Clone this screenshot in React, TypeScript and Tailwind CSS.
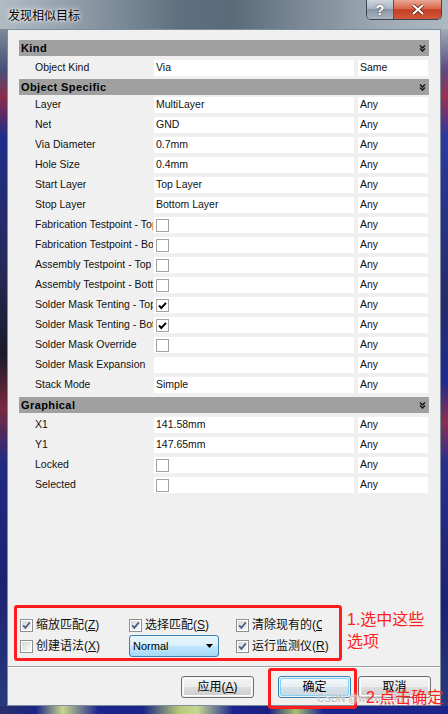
import React from "react"

type Row = {
    label: string
    header?: boolean
    value?: string
    check?: boolean
    match?: string
    mt: string
}

const rows: Row[] = [
    { label: 'Kind', header: true, mt: 'mt-0' },
    { label: 'Object Kind', value: 'Via', match: 'Same', mt: 'mt-[4px]' },
    { label: 'Object Specific', header: true, mt: 'mt-[3px]' },
    { label: 'Layer', value: 'MultiLayer', match: 'Any', mt: 'mt-[2px]' },
    { label: 'Net', value: 'GND', match: 'Any', mt: 'mt-[4px]' },
    { label: 'Via Diameter', value: '0.7mm', match: 'Any', mt: 'mt-[4px]' },
    { label: 'Hole Size', value: '0.4mm', match: 'Any', mt: 'mt-[4px]' },
    { label: 'Start Layer', value: 'Top Layer', match: 'Any', mt: 'mt-[4px]' },
    { label: 'Stop Layer', value: 'Bottom Layer', match: 'Any', mt: 'mt-[4px]' },
    { label: 'Fabrication Testpoint - Top', check: false, match: 'Any', mt: 'mt-[4px]' },
    { label: 'Fabrication Testpoint - Bottom', check: false, match: 'Any', mt: 'mt-[4px]' },
    { label: 'Assembly Testpoint - Top', check: false, match: 'Any', mt: 'mt-[4px]' },
    { label: 'Assembly Testpoint - Bottom', check: false, match: 'Any', mt: 'mt-[4px]' },
    { label: 'Solder Mask Tenting - Top', check: true, match: 'Any', mt: 'mt-[4px]' },
    { label: 'Solder Mask Tenting - Bottom', check: true, match: 'Any', mt: 'mt-[4px]' },
    { label: 'Solder Mask Override', check: false, match: 'Any', mt: 'mt-[4px]' },
    { label: 'Solder Mask Expansion', value: '', match: 'Any', mt: 'mt-[4px]' },
    { label: 'Stack Mode', value: 'Simple', match: 'Any', mt: 'mt-[4px]' },
    { label: 'Graphical', header: true, mt: 'mt-[4px]' },
    { label: 'X1', value: '141.58mm', match: 'Any', mt: 'mt-[4px]' },
    { label: 'Y1', value: '147.65mm', match: 'Any', mt: 'mt-[4px]' },
    { label: 'Locked', check: false, match: 'Any', mt: 'mt-[4px]' },
    { label: 'Selected', check: false, match: 'Any', mt: 'mt-[4px]' },
]

const uiFont = { fontFamily: '"Liberation Sans", Arial, sans-serif' }
const cjkFont = { fontFamily: '"Liberation Sans", "Noto Sans CJK SC", sans-serif' }

const Chevrons = () => (
    <svg width="7" height="7" viewBox="0 0 7 7" className="shrink-0">
        <path d="M1 0.5 L3.5 3 L6 0.5 M1 3.5 L3.5 6 L6 3.5" stroke="#111" strokeWidth="1.4" fill="none" />
    </svg>
)

// flat box used inside the property grid
const GridCheck = ({ on }: { on: boolean }) => (
    <div className="w-[13px] h-[13px] border border-[#a2a2a2] bg-white flex items-center justify-center">
        {on && (
            <svg width="11" height="11" viewBox="0 0 11 11">
                <path d="M2 5.5 L4.3 8 L9 2.8" stroke="#000" strokeWidth="1.9" fill="none" />
            </svg>
        )}
    </div>
)

// win7 style check box for the option area
const WinCheck = ({ on }: { on: boolean }) => (
    <div className="w-[13px] h-[13px] border border-[#8e8f8f] bg-white p-px shrink-0">
        <div className="w-full h-full bg-[linear-gradient(135deg,#d6d6d6_0%,#ececec_60%,#f9f9f9_100%)] flex items-center justify-center">
            {on && (
                <svg width="9" height="9" viewBox="0 0 9 9">
                    <path d="M1.2 4.4 L3.4 6.8 L7.8 1.4" stroke="#4a5d8c" strokeWidth="1.8" fill="none" />
                </svg>
            )}
        </div>
    </div>
)

const Opt = ({ on, text, key_, w }: { on: boolean; text: string; key_: string; w?: string }) => (
    <div className="flex items-center gap-[3px]">
        <WinCheck on={on} />
        <span className={`text-[12px] text-[#111] whitespace-nowrap overflow-hidden ${w ?? ''}`} style={cjkFont}>
            {text}(<span className="underline">{key_}</span>)
        </span>
    </div>
)

const WinButton = ({ label, primary, className }: { label: React.ReactNode; primary?: boolean; className?: string }) => (
    <div
        className={`w-[73px] h-[22px] rounded-[3px] border ${primary ? 'border-[#3c7fb1]' : 'border-[#707070]'} p-px ${className ?? ''}`}
    >
        <div
            className={`w-full h-full rounded-[2px] flex items-center justify-center text-[12px] text-black ${
                primary
                    ? 'border border-[#7fd3f5] bg-[linear-gradient(180deg,#f2f7fa_0%,#e6eef3_48%,#d6e2ea_50%,#cbd9e3_100%)]'
                    : 'border border-[#fcfcfc] bg-[linear-gradient(180deg,#f2f2f2_0%,#ebebeb_48%,#dddddd_50%,#cfcfcf_100%)]'
            }`}
            style={cjkFont}
        >
            {label}
        </div>
    </div>
)

export default function App() {
    return (
        <div className="relative w-[448px] h-[714px] overflow-hidden flex flex-col bg-[#1b2470]">
            {/* title bar */}
            <div className="h-[29px] flex justify-between shrink-0 bg-[linear-gradient(90deg,#b1bbc4_0%,#8e9ba7_18%,#5e707f_40%,#5a6b7a_52%,#7c8a97_68%,#9ea9b3_85%,#aeb8c1_100%)]">
                <div
                    className="pl-[8px] pt-[7px] text-[12px] text-black [text-shadow:0_0_6px_#ffffff,0_0_3px_#ffffff]"
                    style={cjkFont}
                >
                    发现相似目标
                </div>
                <div className="flex self-start mr-[6px] h-[20px] border border-t-0 border-[#3a4654] rounded-b-[5px] overflow-hidden">
                    <div className="w-[27px] h-full flex items-center justify-center border-r border-[#4a5664] bg-[linear-gradient(180deg,#cfd6dd_0%,#aab5c0_45%,#8996a3_50%,#aab5bf_100%)]">
                        <span className="text-white font-bold text-[14px] leading-none [text-shadow:0_0_2px_#2b3440]" style={uiFont}>?</span>
                    </div>
                    <div className="w-[47px] h-full flex items-center justify-center bg-[linear-gradient(180deg,#e9a896_0%,#d8664a_45%,#c53f24_52%,#d0583c_100%)]">
                        <svg width="14" height="11" viewBox="0 0 14 11">
                            <path d="M2 1 L12 10 M12 1 L2 10" stroke="#5a1a10" strokeWidth="3.6" />
                            <path d="M2 1 L12 10 M12 1 L2 10" stroke="#fff" strokeWidth="2.2" />
                        </svg>
                    </div>
                </div>
            </div>

            <div className="flex flex-1 min-h-0">
                {/* left frame */}
                <div className="w-[7px] bg-[linear-gradient(180deg,#7d8a97_0%,#47507a_6%,#8a2a4a_10%,#1f2d8a_16%,#262a5a_35%,#1a1a2a_48%,#7a2a40_56%,#202a80_64%,#1c2272_82%,#283a7c_100%)]" />

                {/* client area */}
                <div className="flex-1 flex flex-col bg-[#f0f0f0] border border-[#7f8c99]" style={uiFont}>
                    <div className="pl-[11px] pt-[10px] flex flex-col w-[421px]">
                        {rows.map((r, i) =>
                            r.header ? (
                                <div key={i} className={`${r.mt} h-[16px] w-[410px] bg-[#a0a0a0] flex items-center justify-between pl-[2px] pr-[3px]`}>
                                    <span className="text-[11px] font-bold tracking-[0.4px] text-black">{r.label}</span>
                                    <Chevrons />
                                </div>
                            ) : (
                                <div key={i} className={`${r.mt} h-[16px] flex text-[10.5px] text-[#111]`}>
                                    <div className="w-[135px] pl-[16px] pr-[1px] flex items-center">
                                        <span className="overflow-hidden whitespace-nowrap">{r.label}</span>
                                    </div>
                                    <div className="w-[200px] bg-white pl-[2px] flex items-center">
                                        {r.check === undefined ? r.value : <GridCheck on={r.check} />}
                                    </div>
                                    <div className="w-[70px] ml-[4px] bg-white pl-[2px] flex items-center">{r.match}</div>
                                </div>
                            )
                        )}
                    </div>

                    <div className="flex-1" />

                    {/* options, framed in red */}
                    <div className="ml-[6px] w-[328px] h-[56px] border-[3px] border-[#ff1c1c] rounded-[3px] pt-[7px] pl-[3px]">
                        <div className="grid grid-cols-[109px_107px_1fr] grid-rows-[20px_22px] items-center">
                            <Opt on text="缩放匹配" key_="Z" />
                            <Opt on text="选择匹配" key_="S" />
                            <Opt on text="清除现有的" key_="C" w="max-w-[70px]" />
                            <Opt on={false} text="创建语法" key_="X" />
                            <div className="w-[90px] h-[22px] rounded-[3px] border border-[#3c7fb1] bg-[linear-gradient(180deg,#eaf6fd_0%,#d9f0fc_48%,#bee6fd_52%,#a7d9f5_100%)] flex items-center justify-between pl-[3px] pr-[5px]">
                                <span className="text-[11px] text-black">Normal</span>
                                <svg width="7" height="4" viewBox="0 0 7 4">
                                    <path d="M0 0 L7 0 L3.5 4 Z" fill="#000" />
                                </svg>
                            </div>
                            <Opt on text="运行监测仪" key_="R" />
                        </div>
                    </div>

                    <div className="mt-[5px] h-[2px] border-t border-[#a0a0a0] border-b border-b-white" />

                    <div className="mt-[8px] mb-[7px] flex justify-end pr-[9px]">
                        <WinButton label={<span>应用(<span className="underline">A</span>)</span>} className="mr-[24px]" />
                        <WinButton label="确定" primary className="mr-[7px]" />
                        <WinButton label="取消" />
                    </div>
                </div>

                {/* right frame */}
                <div className="w-[7px] bg-[linear-gradient(180deg,#a1acb6_0%,#5d4a80_6%,#9a3050_10%,#2a3aa0_16%,#262c6a_40%,#1e2a90_52%,#8a3050_58%,#2a2f8c_64%,#1c2272_85%,#2a3a7c_100%)]" />
            </div>

            {/* bottom frame */}
            <div className="h-[8px] shrink-0 bg-[linear-gradient(90deg,#2a2f6a_0%,#1b2488_8%,#c8d48c_14%,#1c2490_22%,#1b2488_32%,#b8c878_40%,#c8d890_44%,#1c2490_52%,#1a2080_60%,#a8c070_66%,#1c2490_72%,#1b2488_100%)]" />

            {/* annotations */}
            <div className="absolute left-[268px] top-[668px] w-[89px] h-[41px] border-[3px] border-[#ff1c1c] rounded-[3px]" />
            <div
                className="absolute left-[347px] top-[609px] text-[16px] leading-[22px] text-[#ff2020]"
                style={cjkFont}
            >
                <div>1.选中这些</div>
                <div>选项</div>
            </div>
            <div
                className="absolute left-[317px] top-[691px] text-[10px] text-[#b9b9b9] [text-shadow:0_0_2px_#ffffff]"
                style={uiFont}
            >
                CSDN @weixin_46
            </div>
            <div className="absolute left-[366px] top-[686px] text-[16px] text-[#ff2020]" style={cjkFont}>
                2.点击确定
            </div>
        </div>
    )
}
